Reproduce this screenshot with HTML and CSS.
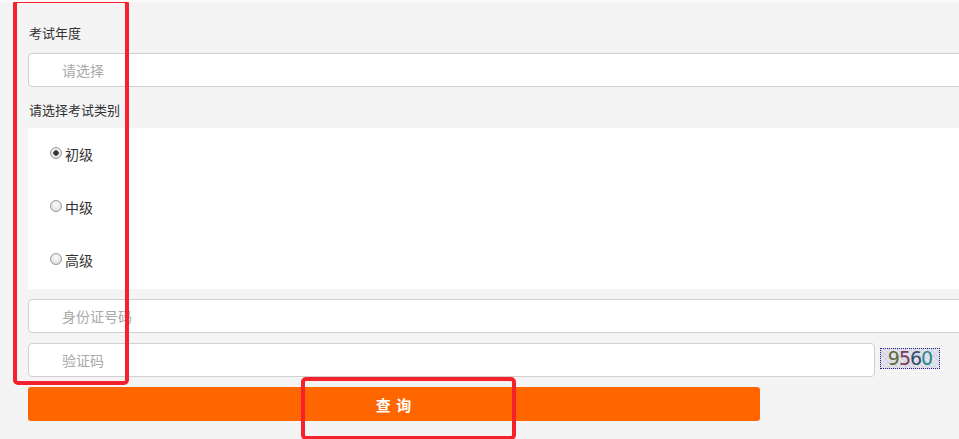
FILE: index.html
```html
<!DOCTYPE html>
<html>
<head>
  <meta charset="utf-8">
  <title>成绩查询</title>
  <link rel="stylesheet" href="styles.css">
</head>
<body>
  <div class="page">
    <form class="query-form">
      <div class="field-label">考试年度</div>
      <div class="input-row">
        <input type="text" class="text-input" placeholder="请选择">
      </div>

      <div class="field-label field-label-gap">请选择考试类别</div>
      <div class="level-box">
        <label class="level-row">
          <input type="radio" name="level" class="radio" checked>
          <span>初级</span>
        </label>
        <label class="level-row">
          <input type="radio" name="level" class="radio">
          <span>中级</span>
        </label>
        <label class="level-row">
          <input type="radio" name="level" class="radio">
          <span>高级</span>
        </label>
      </div>

      <div class="input-row">
        <input type="text" class="text-input" placeholder="身份证号码">
      </div>
      <div class="input-row captcha-row">
        <input type="text" class="text-input captcha-input" placeholder="验证码">
        <span class="captcha">
          <span class="d1">9</span><span class="d2">5</span><span class="d3">6</span><span class="d4">0</span>
        </span>
      </div>

      <button type="button" class="submit-button">查 询</button>
    </form>

    <!-- annotation marks from the screenshot -->
    <div class="mark mark-left"></div>
    <div class="mark mark-button"></div>
  </div>
</body>
</html>
```

FILE: styles.css
```css
* {
  margin: 0;
  padding: 0;
  box-sizing: border-box;
}

html, body {
  width: 100%;
  height: 100%;
  overflow: hidden;
}

body {
  background: #f4f4f4;
  border-top: 2px solid #fafafa;
  font-family: "Noto Sans CJK SC", "Liberation Sans", sans-serif;
  color: #333;
}

.page {
  position: relative;
  height: 100%;
}

.query-form {
  width: 1000px;
  padding: 22px 0 0 28px;
  display: flex;
  flex-direction: column;
}

.field-label {
  font-size: 13px;
  line-height: 18px;
  height: 18px;
  padding-left: 1px;
  margin-bottom: 11px;
  color: #333;
}

.field-label-gap {
  margin-top: 14px;
  margin-bottom: 9px;
}

.input-row {
  display: flex;
  align-items: center;
  gap: 5px;
}

.text-input {
  flex: 1;
  height: 34px;
  border: 1px solid #cfcfcf;
  border-radius: 4px;
  background: #fff;
  padding-left: 33px;
  font-family: inherit;
  font-size: 14px;
  color: #333;
  outline: none;
}

.text-input::placeholder {
  color: #a9a9a9;
}

.level-box {
  background: #fff;
  height: 161px;
  padding: 0 0 3px 22px;
  margin-bottom: 10px;
  display: flex;
  flex-direction: column;
}

.level-row {
  height: 53px;
  display: flex;
  align-items: center;
  gap: 3px;
  font-size: 14px;
  color: #333;
}

.radio {
  appearance: none;
  -webkit-appearance: none;
  width: 12px;
  height: 12px;
  border: 1px solid #9a9a9a;
  border-radius: 50%;
  background: radial-gradient(circle at 50% 40%, #fafafa 0%, #e2e2e2 70%, #d0d0d0 100%);
  margin-top: -2px;
}

.radio:checked {
  background:
    radial-gradient(circle, #333 0, #333 2.4px, transparent 3px),
    radial-gradient(circle at 50% 40%, #fafafa 0%, #e2e2e2 70%, #d0d0d0 100%);
}

.captcha-row {
  margin-top: 10px;
  width: 912px;
}

.captcha {
  flex: 0 0 auto;
  width: 60px;
  height: 21px;
  border: 1px dotted #1f1f90;
  background:
    repeating-linear-gradient(45deg, rgba(150, 150, 200, 0.22) 0 1px, transparent 1px 3px),
    repeating-linear-gradient(-45deg, rgba(200, 180, 150, 0.18) 0 1px, transparent 1px 4px),
    #e6e6ee;
  font-family: "DejaVu Sans", sans-serif;
  font-size: 19px;
  line-height: 19px;
  letter-spacing: -1px;
  text-align: center;
  margin-top: -4px;
}

.captcha .d1 { color: #5f6a3a; }
.captcha .d2 { color: #7a3a5a; }
.captcha .d3 { color: #2f4f6f; }
.captcha .d4 { color: #2a8a8a; }

.submit-button {
  margin-top: 10px;
  width: 732px;
  height: 34px;
  border: none;
  border-radius: 3px;
  background: #ff6600;
  color: #fff;
  font-family: inherit;
  font-size: 15px;
  font-weight: bold;
  letter-spacing: 1px;
  cursor: pointer;
}

.mark {
  position: absolute;
  border: 4px solid #f5222d;
  border-radius: 5px;
  pointer-events: none;
}

.mark-left {
  left: 13px;
  top: -3px;
  width: 116px;
  height: 386px;
}

.mark-button {
  left: 301px;
  top: 375px;
  width: 215px;
  height: 63px;
}
```
